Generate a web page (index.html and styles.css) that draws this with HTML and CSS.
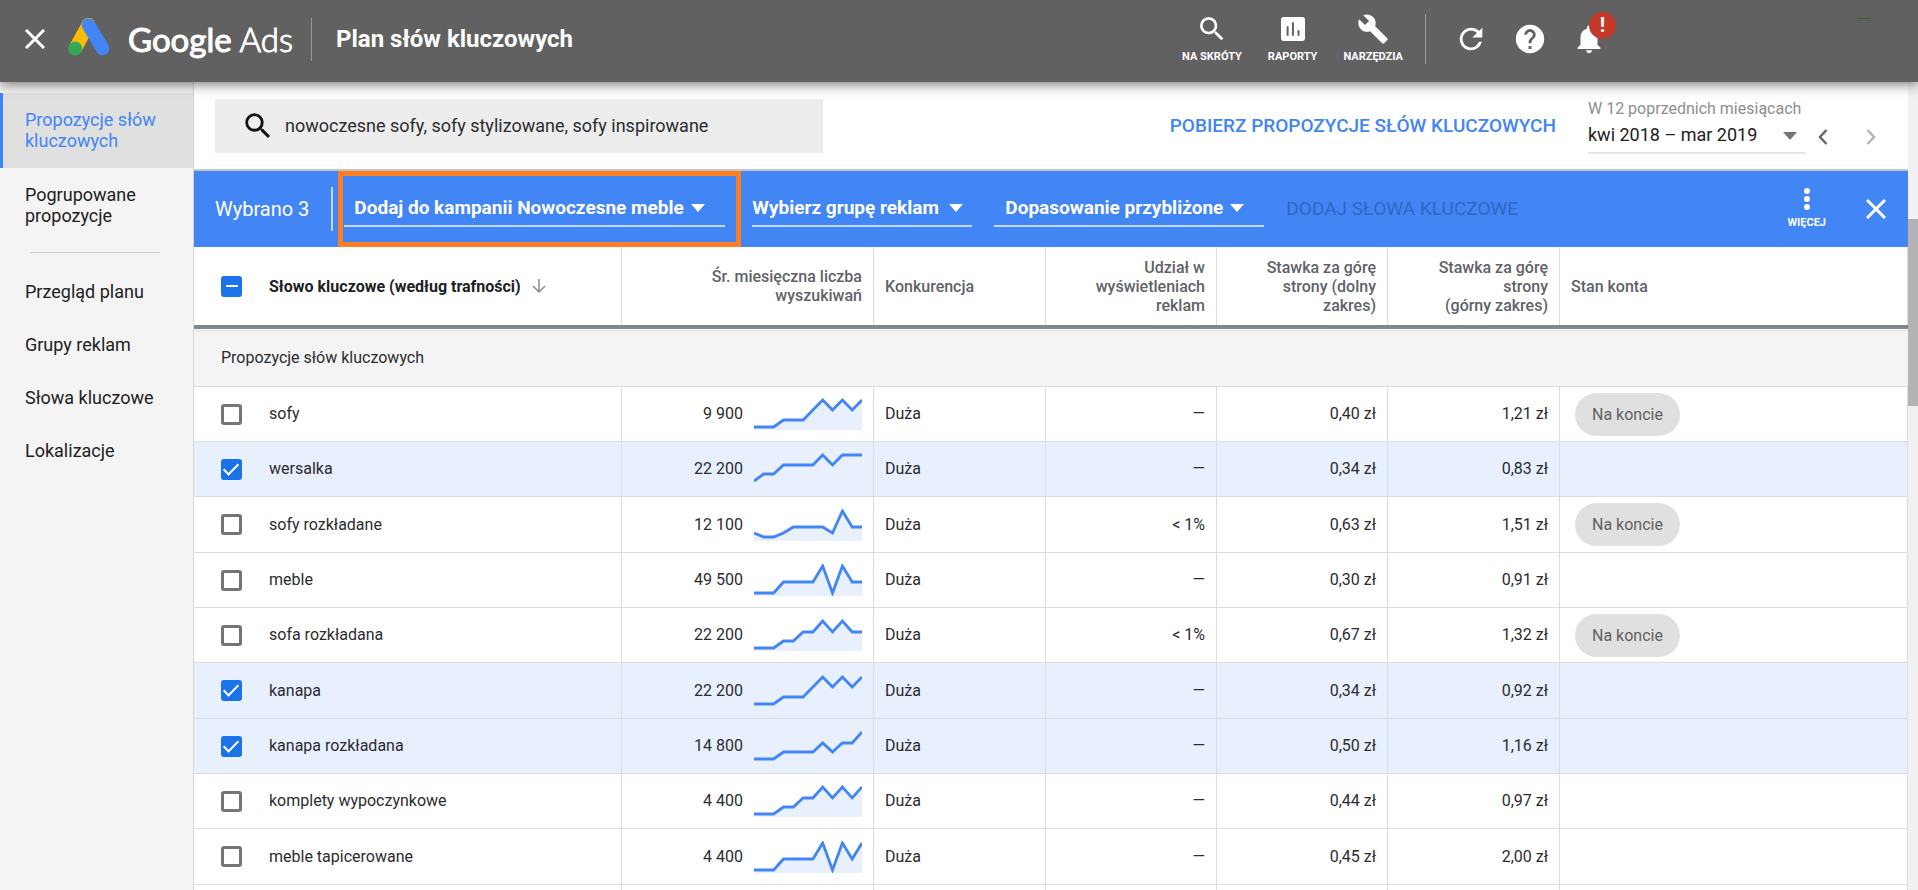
FILE: index.html
```
<!DOCTYPE html>
<html lang="pl">
<head>
<meta charset="utf-8">
<title>Plan słów kluczowych – Google Ads</title>
<link rel="stylesheet" href="styles.css">
</head>
<body>
<header class="topbar">
  <button class="icon-btn close-btn" aria-label="Zamknij"><svg width="20" height="20" viewBox="0 0 20 20"><path d="M1 1L19 19M19 1L1 19" stroke="#fff" stroke-width="3" fill="none"/></svg></button>
  <a class="brand" href="#">
    <svg class="brand-mark" width="42" height="38" viewBox="0 0 42 38"><path d="M20.500 6.500L7.500 30" stroke="#fbbc04" stroke-width="13.500" stroke-linecap="round"/><path d="M20.500 7L34.500 30.500" stroke="#4285f4" stroke-width="13.500" stroke-linecap="round"/><circle cx="7.200" cy="30.500" r="6.900" fill="#34a853"/></svg>
    <span class="brand-name"><b>Google</b> Ads</span>
  </a>
  <h1 class="page-title">Plan słów kluczowych</h1>
  <nav class="tools" aria-label="Narzędzia konta">
    <button class="tool"><svg width="32" height="32" viewBox="0 0 24 24"><path fill="#fff" d="M15.500 14h-.79l-.28-.27A6.470 6.470 0 0 0 16 9.500 6.500 6.500 0 1 0 9.500 16c1.610 0 3.090-.59 4.230-1.570l.27.280v.79l5 4.990L20.490 19l-4.990-5zm-6 0a4.500 4.500 0 1 1 0-9 4.500 4.500 0 0 1 0 9z"/></svg>NA SKRÓTY</button>
    <button class="tool"><svg width="32" height="32" viewBox="0 0 24 24"><path fill="#fff" d="M19 3H5a2 2 0 0 0-2 2v14c0 1.100.9 2 2 2h14a2 2 0 0 0 2-2V5a2 2 0 0 0-2-2zM8.700 17H7.200v-7h1.500v7zm4 0h-1.500V7h1.500v10zm4.200 0h-1.500v-4h1.500v4z"/></svg>RAPORTY</button>
    <button class="tool"><svg width="32" height="32" viewBox="0 0 24 24"><path fill="#fff" d="M22.700 19l-9.100-9.100c.9-2.300.4-5-1.500-6.900-2-2-5-2.400-7.400-1.300L9 6 6 9 1.600 4.700C.4 7.100.9 10.100 2.900 12.100c1.900 1.900 4.600 2.400 6.900 1.500l9.100 9.100c.4.4 1 .4 1.400 0l2.300-2.300c.5-.4.5-1.100.1-1.400z"/></svg>NARZĘDZIA</button>
  </nav>
  <div class="actions">
    <button class="icon-btn" aria-label="Odśwież"><svg width="34" height="34" viewBox="0 0 24 24"><path fill="#fff" d="M17.650 6.350A7.960 7.960 0 0 0 12 4a8 8 0 1 0 7.730 10h-2.080A6 6 0 1 1 12 6c1.660 0 3.140.69 4.220 1.780L13 11h7V4l-2.350 2.350z"/></svg></button>
    <button class="icon-btn" aria-label="Pomoc"><svg width="34" height="34" viewBox="0 0 24 24"><path fill="#fff" d="M12 2a10 10 0 1 0 0 20 10 10 0 0 0 0-20zm1 17h-2v-2h2v2zm2.070-7.750l-.9.920C13.450 12.900 13 13.500 13 15h-2v-.5c0-1.100.45-2.100 1.170-2.830l1.240-1.260c.37-.36.59-.86.59-1.410a2 2 0 1 0-4 0H8a4 4 0 1 1 8 0c0 .88-.36 1.680-.93 2.250z"/></svg></button>
    <button class="icon-btn bell" aria-label="Powiadomienia"><svg width="34" height="34" viewBox="0 0 24 24"><path fill="#fff" d="M12 22a2 2 0 0 0 2-2h-4c0 1.100.89 2 2 2zm6-6v-5c0-3.070-1.640-5.640-4.500-6.320V4a1.500 1.500 0 0 0-3 0v.68C7.630 5.360 6 7.920 6 11v5l-2 2v1h16v-1l-2-2z"/></svg><span class="badge">!</span></button>
  </div>
  <div class="avatar-edge"></div>
</header>

<div class="layout">
  <nav class="sidebar" aria-label="Plan">
    <a class="nav-item active" href="#">Propozycje słów kluczowych</a>
    <a class="nav-item" href="#">Pogrupowane propozycje</a>
    <hr class="nav-rule">
    <a class="nav-item" href="#">Przegląd planu</a>
    <a class="nav-item" href="#">Grupy reklam</a>
    <a class="nav-item" href="#">Słowa kluczowe</a>
    <a class="nav-item" href="#">Lokalizacje</a>
  </nav>

  <main class="content">
    <section class="filters">
      <label class="search">
        <svg width="34" height="34" viewBox="0 0 24 24"><path fill="#111" d="M15.500 14h-.79l-.28-.27A6.470 6.470 0 0 0 16 9.500 6.500 6.500 0 1 0 9.500 16c1.610 0 3.090-.59 4.230-1.570l.27.280v.79l5 4.990L20.490 19l-4.990-5zm-6 0a4.500 4.500 0 1 1 0-9 4.500 4.500 0 0 1 0 9z"/></svg>
        <input type="text" aria-label="Słowa kluczowe" value="nowoczesne sofy, sofy stylizowane, sofy inspirowane">
      </label>
      <a class="download" href="#">POBIERZ PROPOZYCJE SŁÓW KLUCZOWYCH</a>
      <div class="period">
        <label class="period-label" for="period">W 12 poprzednich miesiącach</label>
        <div class="period-row">
          <span class="select-wrap period-wrap"><select id="period"><option>kwi 2018 – mar 2019</option></select></span>
          <button class="icon-btn" aria-label="Poprzedni okres"><svg width="10" height="16" viewBox="0 0 10 16"><path d="M8.500 1L2 8l6.500 7" stroke="#666" stroke-width="2.500" fill="none"/></svg></button>
          <button class="icon-btn next" aria-label="Następny okres"><svg width="10" height="16" viewBox="0 0 10 16"><path d="M1.500 1L8 8l-6.500 7" stroke="#b5b5b5" stroke-width="2.500" fill="none"/></svg></button>
        </div>
      </div>
    </section>

    <section class="selection">
      <span class="count">Wybrano 3</span>
      <div class="highlight"><span class="select-wrap"><select aria-label="Plan lub kampania"><option>Dodaj do kampanii Nowoczesne meble</option></select></span></div>
      <span class="select-wrap group-wrap"><select aria-label="Grupa reklam"><option>Wybierz grupę reklam</option></select></span>
      <span class="select-wrap match-wrap"><select aria-label="Dopasowanie"><option>Dopasowanie przybliżone</option></select></span>
      <button class="add" disabled>DODAJ SŁOWA KLUCZOWE</button>
      <button class="more"><svg width="8" height="24" viewBox="0 0 8 24"><g fill="#fff"><circle cx="4" cy="3" r="3"/><circle cx="4" cy="11" r="3"/><circle cx="4" cy="19" r="3"/></g></svg>WIĘCEJ</button>
      <button class="icon-btn" aria-label="Wyczyść wybór"><svg width="20" height="20" viewBox="0 0 20 20"><path d="M1 1L19 19M19 1L1 19" stroke="#fff" stroke-width="3" fill="none"/></svg></button>
    </section>

    <table class="keywords">
      <colgroup><col class="c-key"><col class="c-vol"><col class="c-std"><col class="c-bid"><col class="c-bid"><col class="c-std"><col></colgroup>
      <thead>
        <tr>
          <th class="key"><div class="cell"><input type="checkbox" class="mixed" aria-label="Zaznacz wszystko">Słowo kluczowe (według trafności)<svg width="16" height="16" viewBox="0 0 16 16"><path d="M8 1v13M2 8l6 6 6-6" stroke="#8c8c8c" stroke-width="1.500" fill="none"/></svg></div></th>
          <th class="num">Śr. miesięczna liczba wyszukiwań</th>
          <th>Konkurencja</th>
          <th class="num">Udział w wyświetleniach reklam</th>
          <th class="num">Stawka za górę strony (dolny zakres)</th>
          <th class="num">Stawka za górę strony<br>(górny zakres)</th>
          <th>Stan konta</th>
        </tr>
        <tr class="group"><th colspan="7">Propozycje słów kluczowych</th></tr>
      </thead>
      <tbody id="rows"></tbody>
    </table>
  </main>
  <div class="scroll"><div class="thumb"></div></div>
</div>
<script src="app.js"></script>
</body>
</html>
```
FILE: styles.css
```
* { box-sizing: border-box; }
body {
  margin: 0;
  height: 100vh;
  overflow: hidden;
  display: flex;
  flex-direction: column;
  font: 16px/20px Roboto, "Liberation Sans", sans-serif;
  color: #2b2c2f;
  background: #f4f4f4;
}
button, input, select { font: inherit; color: inherit; margin: 0; padding: 0; border: 0; background: none; }
a { color: inherit; text-decoration: none; }
svg { display: block; flex: none; }
.icon-btn { display: flex; }

.topbar {
  display: flex;
  align-items: center;
  flex: none;
  height: 82px;
  padding: 0 24px 4px 25px;
  background: #616161;
  color: #fff;
  box-shadow: 0 2px 12px rgba(0, 0, 0, .55);
  z-index: 2;
}
.brand { display: flex; align-items: center; gap: 18px; margin-left: 23px; }
.brand-mark { margin-top: -4px; }
.brand-name { font: 300 33px/44px Lato, sans-serif; -webkit-text-stroke: 1px #fff; }
.brand-name b { font-weight: 400; }
.page-title {
  margin: 0 auto 0 18px;
  padding-left: 24px;
  border-left: 1px solid #9a9a9a;
  font-size: 24px;
  line-height: 43px;
  font-weight: 700;
}
.tools { display: flex; gap: 26px; padding-right: 22px; border-right: 1px solid #9a9a9a; }
.tool { display: flex; flex-direction: column; align-items: center; gap: 5px; font-size: 11px; line-height: 14px; font-weight: 700; }
.tool svg { margin-top: -1px; }
.actions { display: flex; gap: 25px; margin: 0 251px 0 28px; }
.bell { position: relative; }
.badge {
  position: absolute;
  left: 17px;
  top: -10px;
  width: 27px;
  height: 27px;
  border-radius: 50%;
  background: #c53929;
  font-size: 20px;
  line-height: 27px;
  font-weight: 700;
  text-align: center;
}
.avatar-edge { align-self: flex-start; width: 14px; height: 1px; margin: 18px 23px 0 0; background: #33691e; }

.layout { display: flex; flex: 1; min-height: 0; }
.sidebar { flex: none; width: 194px; padding-top: 11px; border-right: 1px solid #d6d6d6; color: #212121; font-size: 18px; line-height: 21px; }
.nav-item { display: block; padding: 16px 24px 16px 25px; }
.nav-item.active { min-height: 75px; padding-left: 22px; border-left: 3px solid #4285f4; background: #e0e0e0; color: #4285f4; }
.nav-rule { width: 130px; height: 1px; margin: 10px 30px 12px; border: 0; background: #cfcfcf; }

.content { flex: 1; min-width: 0; background: #fff; }
.filters { display: flex; align-items: center; height: 89px; padding: 0 32px 0 21px; border-bottom: 2px solid #c4c4c4; }
.search { display: flex; align-items: center; width: 608px; height: 54px; padding: 0 24px 0 26px; gap: 10px; background: #ededed; }
.search input { flex: 1; min-width: 0; font-size: 18px; line-height: 24px; }
.download { margin: 0 32px 0 auto; color: #4285f4; font-size: 19px; line-height: 24px; font-weight: 500; }
.period { margin-top: 2px; color: #212121; }
.period-label { display: block; color: #8e8e8e; font-size: 16px; line-height: 20px; }
.period-row { display: flex; align-items: center; gap: 12px; }
.next { margin-left: 26px; }

.select-wrap { position: relative; display: block; border-bottom: 2px solid #c3d8fc; }
.select-wrap select { width: 100%; appearance: none; }
.select-wrap::after {
  content: "";
  position: absolute;
  top: 50%;
  right: 20px;
  margin-top: -4px;
  border: 7px solid transparent;
  border-top: 8px solid #fff;
  border-bottom: 0;
  pointer-events: none;
}
.period-wrap { width: 218px; padding: 5px 0 6px; border-color: #e5e5e5; font-size: 18px; line-height: 22px; }
.period-wrap::after { right: 9px; border-top-color: #757575; }

.selection { display: flex; align-items: center; height: 76px; padding: 0 22px 0 21px; background: #4285f4; color: #fff; font-size: 19px; line-height: 24px; }
.selection select { font-weight: 700; height: 34px; }
.count { padding-right: 22px; border-right: 2px solid #c3d8fc; font-size: 20px; line-height: 44px; }
.highlight { margin-left: 5px; padding: 15px 11px 16px 1px; border: 5px solid #ff7f27; align-self: stretch; }
.highlight .select-wrap { width: 381px; padding-left: 10px; }
.group-wrap { width: 220px; margin: 0 22px 0 11px; }
.match-wrap { width: 270px; padding-left: 11px; }
.group-wrap::after { right: 9px; }
.add { margin: 0 auto 0 22px; color: #2f67c4; }
.more { display: flex; flex-direction: column; align-items: center; gap: 4px; margin-right: 40px; font-size: 11px; line-height: 14px; font-weight: 700; }

.keywords { width: 100%; table-layout: fixed; border-collapse: separate; border-spacing: 0; }
.c-key { width: 428px; }
.c-vol { width: 252px; }
.c-std { width: 172px; }
.c-bid { width: 171px; }
.keywords th, .keywords td { padding: 0 11px; border-right: 1px solid #dadce0; border-bottom: 1px solid #dadce0; text-align: left; font-weight: 400; }
.keywords thead tr:first-child th { height: 78px; border-bottom: 0; color: #5f6368; line-height: 19px; font-weight: 500; }
.keywords .key { padding-left: 27px; }
.keywords thead tr:first-child .key { color: #202124; font-weight: 700; }
.keywords .num { text-align: right; }
.keywords .group th {
  height: 62px;
  padding-left: 27px;
  border-top: 4px solid #80868b;
  border-right: 0;
  background: #f4f4f4;
  box-shadow: inset 0 1px #fff, inset 0 2px #dadce0;
}
.keywords td { height: 55px; }
.keywords tr:nth-child(3n) td { height: 56px; }
.keywords .selected { background: #e8effd; }
.cell { display: flex; align-items: center; }
.volume { justify-content: flex-end; gap: 11px; }
.key svg { margin-left: 10px; }
.keywords input {
  appearance: none;
  flex: none;
  width: 21px;
  height: 21px;
  margin-right: 27px;
  border: 3px solid #757575;
  border-radius: 3px;
}
.keywords input:checked { position: relative; border-color: #1a73e8; background-color: #1a73e8; }
.keywords input:checked::after {
  content: "";
  position: absolute;
  box-sizing: border-box;
  left: 3px;
  top: -2px;
  width: 8px;
  height: 15px;
  border: solid #fff;
  border-width: 0 2px 2px 0;
  transform: rotate(45deg);
}
.keywords .mixed { border: 0; background: linear-gradient(#fff, #fff) center / 12px 2px no-repeat #1a73e8; }
.chip { display: inline-block; margin-left: 4px; padding: 0 17px; border-radius: 22px; background: #e0e0e0; color: #616161; line-height: 43px; vertical-align: middle; }

.scroll { flex: none; width: 10px; background: #f1f1f1; padding-top: 137px; }
.thumb { height: 187px; background: #b3b3b3; }
```
FILE: app.js
```
const rows = [
  ["sofy", "9 900", "—", "0,40 zł", "1,21 zł", true, false, [29, 29, 29, 22, 22, 22, 12, 2, 12, 2, 12, 2]],
  ["wersalka", "22 200", "—", "0,34 zł", "0,83 zł", false, true, [28, 21, 21, 12, 12, 12, 12, 2, 12, 2, 2, 2]],
  ["sofy rozkładane", "12 100", "< 1%", "0,63 zł", "1,51 zł", true, false, [24, 28, 28, 24, 18, 18, 18, 18, 24, 2, 18, 18]],
  ["meble", "49 500", "—", "0,30 zł", "0,91 zł", false, false, [29, 29, 29, 18, 18, 18, 18, 2, 29, 2, 18, 18]],
  ["sofa rozkładana", "22 200", "< 1%", "0,67 zł", "1,32 zł", true, false, [29, 29, 29, 22, 22, 13, 13, 2, 13, 2, 13, 13]],
  ["kanapa", "22 200", "—", "0,34 zł", "0,92 zł", false, true, [29, 29, 29, 22, 22, 22, 12, 2, 12, 2, 12, 2]],
  ["kanapa rozkładana", "14 800", "—", "0,50 zł", "1,16 zł", false, true, [29, 29, 29, 22, 22, 22, 22, 13, 22, 13, 13, 2]],
  ["komplety wypoczynkowe", "4 400", "—", "0,44 zł", "0,97 zł", false, false, [29, 29, 29, 22, 22, 13, 13, 2, 13, 2, 13, 2]],
  ["meble tapicerowane", "4 400", "—", "0,45 zł", "2,00 zł", false, false, [29, 29, 29, 18, 18, 18, 18, 2, 29, 2, 18, 2]],
  ["", "", "", "", "", false, false, null]
];

function sparkline(values) {
  const points = values.map((y, i) => `${(i * 108 / 11).toFixed(1)},${y}`).join(" ");
  return `<svg width="108" height="32" viewBox="0 0 108 32"><polygon points="0,32 ${points} 108,32" fill="#e8f0fe"/><polyline points="${points}" fill="none" stroke="#4285f4" stroke-width="2.8"/></svg>`;
}

document.getElementById("rows").innerHTML = rows.map(([key, volume, share, low, high, inAccount, selected, trend]) =>
  trend ? `<tr class="${selected ? "selected" : ""}">
    <td class="key"><label class="cell"><input type="checkbox"${selected ? " checked" : ""}>${key}</label></td>
    <td class="num"><div class="cell volume">${volume}${sparkline(trend)}</div></td>
    <td>Duża</td><td class="num">${share}</td><td class="num">${low}</td><td class="num">${high}</td>
    <td>${inAccount ? '<span class="chip">Na koncie</span>' : ""}</td></tr>`
  : `<tr>${"<td></td>".repeat(7)}</tr>`).join("");
```
